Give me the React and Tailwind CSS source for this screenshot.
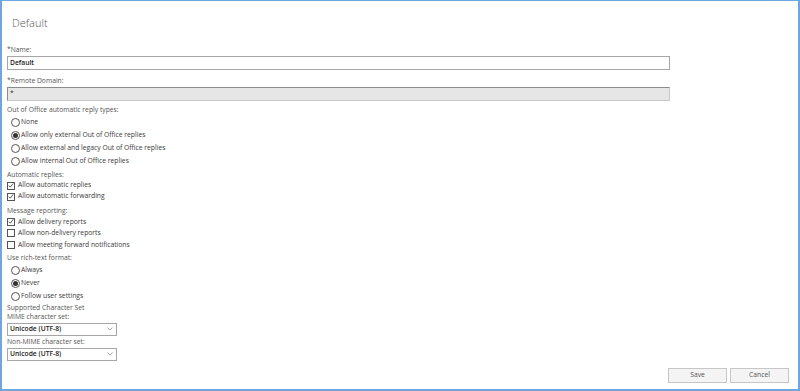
import React from 'react';

const FONT = "font-['Segoe_UI','Open_Sans','Noto_Sans',sans-serif]";

const Label = ({ children, className = '' }) => (
  <div className={`text-[6.75px] leading-[10px] text-[#555] ${className}`}>{children}</div>
);

const Radio = ({ checked, label }) => (
  <div className="flex items-center h-[13px] pl-[4px]">
    <span className="w-[9px] h-[9px] rounded-full border border-[#555] bg-white flex items-center justify-center">
      {checked && <span className="w-[5px] h-[5px] rounded-full bg-[#333]" />}
    </span>
    <span className="ml-[1px] text-[6.75px] text-[#3a3a3a]">{label}</span>
  </div>
);

const Check = ({ checked, label, h = 'h-[11px]' }) => (
  <div className={`flex items-center ${h}`}>
    <span className="w-[8px] h-[8px] border border-[#555] bg-white flex items-center justify-center">
      {checked && (
        <svg viewBox="0 0 8 8" className="w-[7px] h-[7px]">
          <path d="M1 4.2 L3 6.2 L7 1.2" fill="none" stroke="#333" strokeWidth="1.1" />
        </svg>
      )}
    </span>
    <span className="ml-[3px] text-[6.75px] text-[#3a3a3a]">{label}</span>
  </div>
);

const Select = ({ value, className = '' }) => (
  <div className={`w-[110px] h-[13px] border border-[#a6a6a6] bg-white flex items-center justify-between pl-[2px] pr-[3px] ${className}`}>
    <span className="text-[6.75px] font-semibold text-[#222]">{value}</span>
    <svg viewBox="0 0 8 5" className="w-[6px] h-[4px]">
      <path d="M0.5 0.5 L4 4 L7.5 0.5" fill="none" stroke="#666" strokeWidth="0.8" />
    </svg>
  </div>
);

const App = () => {
  return (
    <div className={`w-[800px] h-[391px] bg-white border-[#6fa5e3] border-t border-l-2 border-r-2 border-b-2 flex flex-col ${FONT}`}>
      <div className="pt-[14px] pl-[10px] text-[11px] leading-[16px] font-light text-[#555]">Default</div>

      <div className="pl-[5px] flex flex-col">
        <Label className="mt-[14px]">*Name:</Label>
        <div className="mt-[1px] w-[663px] h-[14px] border border-[#a6a6a6] bg-white flex items-center pl-[2px] text-[6.75px] font-semibold text-[#222]">
          Default
        </div>

        <Label className="mt-[6px]">*Remote Domain:</Label>
        <div className="mt-[1px] w-[663px] h-[14px] border border-[#c8c8c8] border-t-[#8a8a8a] border-l-[#8a8a8a] bg-[#e6e6e6] flex items-center pl-[2px] text-[6.75px] text-[#333]">
          *
        </div>

        <Label className="mt-[4px]">Out of Office automatic reply types:</Label>
        <div className="mt-[1px] flex flex-col">
          <Radio label="None" />
          <Radio checked label="Allow only external Out of Office replies" />
          <Radio label="Allow external and legacy Out of Office replies" />
          <Radio label="Allow internal Out of Office replies" />
        </div>

        <Label className="mt-[2px]">Automatic replies:</Label>
        <Check checked label="Allow automatic replies" />
        <Check checked label="Allow automatic forwarding" />

        <Label className="mt-[4px]">Message reporting:</Label>
        <Check checked h="h-[11.5px]" label="Allow delivery reports" />
        <Check h="h-[11.5px]" label="Allow non-delivery reports" />
        <Check h="h-[11.5px]" label="Allow meeting forward notifications" />

        <Label className="mt-[2.5px]">Use rich-text format:</Label>
        <div className="mt-[0.5px] flex flex-col">
          <Radio label="Always" />
          <Radio checked label="Never" />
          <Radio label="Follow user settings" />
        </div>

        <div className="text-[6.75px] leading-[9px] text-[#555]">Supported Character Set</div>
        <div className="text-[6.75px] leading-[9px] text-[#555]">MIME character set:</div>
        <Select className="mt-[2px]" value="Unicode (UTF-8)" />
        <div className="mt-[1px] text-[6.75px] leading-[9px] text-[#555]">Non-MIME character set:</div>
        <Select className="mt-[2px]" value="Unicode (UTF-8)" />
      </div>

      <div className="mt-auto flex justify-end gap-[3px] pr-[9px] pb-[6px]">
        <button className="w-[59px] h-[15px] border border-[#c6c6c6] bg-[#f4f4f4] text-[6.75px] text-[#555]">Save</button>
        <button className="w-[59px] h-[15px] border border-[#c6c6c6] bg-[#f4f4f4] text-[6.75px] text-[#555]">Cancel</button>
      </div>
    </div>
  );
};

export default App;
